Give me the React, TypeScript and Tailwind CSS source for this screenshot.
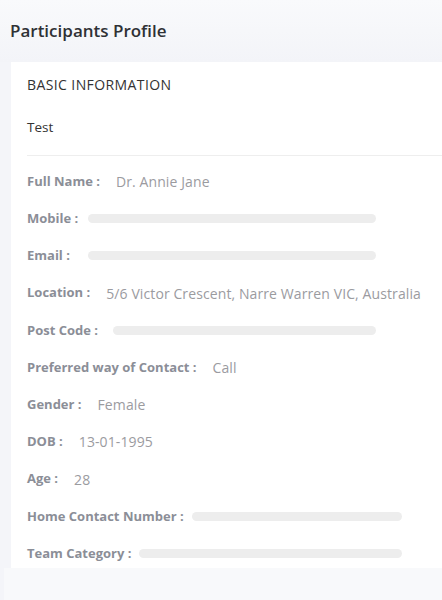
import React from 'react';

type Row = {
  label: string;
  value?: string;
  bar?: { ml: string; w: string };
};

const rows: Row[] = [
  { label: 'Full Name :', value: 'Dr. Annie Jane' },
  { label: 'Mobile :', bar: { ml: 'ml-[10px]', w: 'w-[288px]' } },
  { label: 'Email :', bar: { ml: 'ml-[18px]', w: 'w-[288px]' } },
  { label: 'Location :', value: '5/6 Victor Crescent, Narre Warren VIC, Australia' },
  { label: 'Post Code :', bar: { ml: 'ml-[15px]', w: 'w-[263px]' } },
  { label: 'Preferred way of Contact :', value: 'Call' },
  { label: 'Gender :', value: 'Female' },
  { label: 'DOB :', value: '13-01-1995' },
  { label: 'Age :', value: '28' },
  { label: 'Home Contact Number :', bar: { ml: 'ml-[8px]', w: 'w-[210px]' } },
  { label: 'Team Category :', bar: { ml: 'ml-[8px]', w: 'w-[263px]' } },
];

const InfoRow: React.FC<{ row: Row }> = ({ row }) => (
  <div className="flex h-[37.2px] items-center whitespace-nowrap">
    <span className="text-[13px] font-bold text-[#8b8e97]">{row.label}</span>
    {row.value && (
      <span className="ml-[16px] text-[14px] tracking-[0.1px] text-[#9b9b9f]">{row.value}</span>
    )}
    {row.bar && <span className={`${row.bar.ml} ${row.bar.w} h-[9px] shrink-0 rounded-full bg-[#ededed]`} />}
  </div>
);

export default function App() {
  return (
    <div className="h-[600px] w-[442px] overflow-hidden bg-[#f4f5f9] font-['Open_Sans',sans-serif]">
      {/* Page title */}
      <div className="flex h-[62px] items-center bg-gradient-to-b from-[#f9fafc] to-[#f3f4f8] pl-[10px]">
        <h1 className="text-[17px] font-semibold text-[#2f3135]">Participants Profile</h1>
      </div>

      {/* Basic information card */}
      <section className="ml-[11px] h-[506px] overflow-hidden bg-white pl-4 pt-[13px]">
        <h2 className="h-5 text-[14px] leading-5 font-medium tracking-[0.4px] text-[#333]">BASIC INFORMATION</h2>
        <p className="mt-[22px] h-5 text-[13.5px] leading-5 text-[#333]">Test</p>
        <div className="mt-[18px] h-px bg-[#eeeeee]" />
        <div className="mt-[7px] flex flex-col">
          {rows.map((r) => (
            <InfoRow key={r.label} row={r} />
          ))}
        </div>
      </section>

      <div className="ml-[4px] h-[32px] bg-[#f8f9fb]" />
    </div>
  );
}
